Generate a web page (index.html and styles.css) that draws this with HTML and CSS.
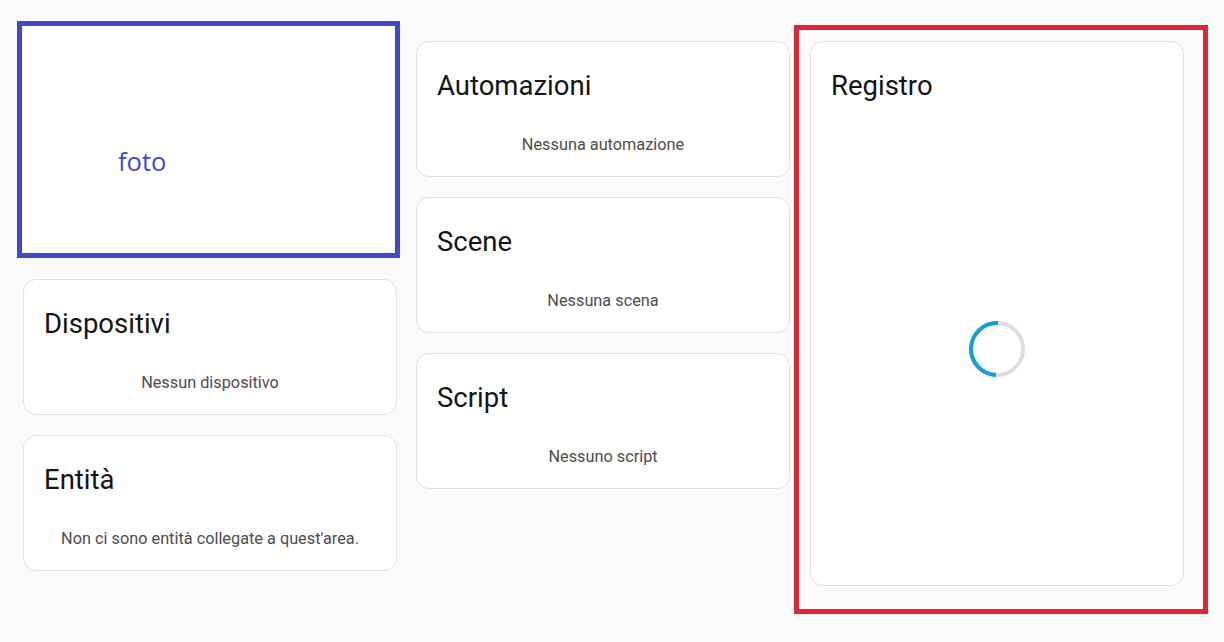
FILE: index.html
```html
<!DOCTYPE html>
<html>
<head>
    <title>Area</title>
    <link rel="stylesheet" href="styles.css">
</head>
<body>
<div class="area">
    <div class="column left">
        <div class="photo">
            <span class="photo-label">foto</span>
        </div>
        <div class="card small">
            <h2>Dispositivi</h2>
            <div class="empty">Nessun dispositivo</div>
        </div>
        <div class="card small">
            <h2>Entità</h2>
            <div class="empty">Non ci sono entità collegate a quest'area.</div>
        </div>
    </div>

    <div class="column middle">
        <div class="card small">
            <h2>Automazioni</h2>
            <div class="empty">Nessuna automazione</div>
        </div>
        <div class="card small">
            <h2>Scene</h2>
            <div class="empty">Nessuna scena</div>
        </div>
        <div class="card small">
            <h2>Script</h2>
            <div class="empty">Nessuno script</div>
        </div>
    </div>

    <div class="column right">
        <div class="card logbook">
            <h2>Registro</h2>
            <div class="loading">
                <svg class="spinner" width="60" height="60" viewBox="0 0 60 60">
                    <circle cx="30" cy="30" r="26" fill="none" stroke="#dedede" stroke-width="4"/>
                    <path d="M31 4 A26 26 0 0 0 29 56" fill="none" stroke="#129fdc" stroke-width="4"/>
                </svg>
            </div>
        </div>
    </div>
</div>
</body>
</html>
```

FILE: styles.css
```css
html, body {
    margin: 0;
    padding: 0;
    background-color: #fafafa;
    color: #141414;
    font-family: Roboto, "Noto Sans", sans-serif;
}

.area {
    display: flex;
    align-items: flex-start;
    padding-top: 21px;
}

.column {
    display: flex;
    flex-direction: column;
    gap: 20px;
}

.left {
    margin-left: 17px;
    width: 383px;
}

.left .card {
    margin-left: 6px;
}

.middle {
    margin-left: 16px;
    padding-top: 20px;
}

.right {
    box-sizing: border-box;
    margin-left: 4px;
    margin-top: 4px;
    width: 414px;
    height: 589px;
    padding: 11px 19px 23px 11px;
    border: 5px solid #dc2630;
}

.photo {
    box-sizing: border-box;
    width: 383px;
    height: 237px;
    margin-bottom: 1px;
    border: 5px solid #3f49c9;
    background-color: #ffffff;
    padding: 120px 0 0 96px;
}

.photo-label {
    font-family: "Open Sans", sans-serif;
    font-size: 25.5px;
    line-height: 30px;
    color: #3f49c9;
}

.card {
    box-sizing: border-box;
    width: 374px;
    background-color: #ffffff;
    border: 1px solid #e2e2e2;
    border-radius: 13px;
}

.card.small {
    height: 136px;
}

.card h2 {
    margin: 0;
    padding: 28px 19px 0 20px;
    font-size: 27.5px;
    font-weight: 400;
    line-height: 32px;
    color: #141414;
}

.empty {
    margin-top: 33px;
    font-size: 16.3px;
    line-height: 20px;
    text-align: center;
    color: #4d4d4d;
}

.logbook {
    height: 545px;
    display: flex;
    flex-direction: column;
}

.loading {
    flex: 1;
    display: flex;
    align-items: center;
    justify-content: center;
    padding-top: 10px;
}

.spinner {
    display: block;
}
```
